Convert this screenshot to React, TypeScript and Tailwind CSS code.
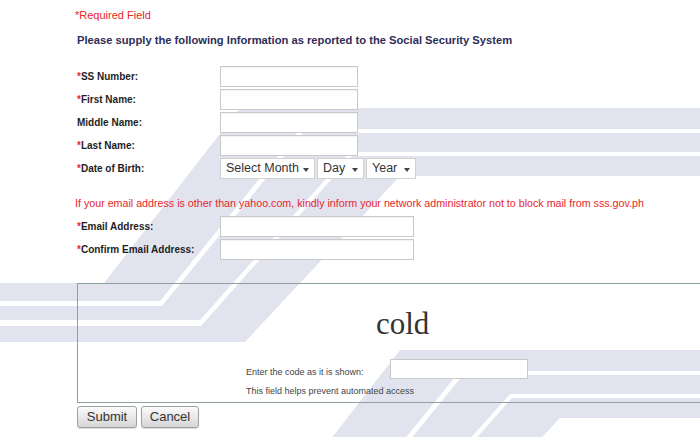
import React from 'react';

type Pt = [number, number];

const R = 720;
const BANDS = (ox: number, oy: number): Pt[][] => {
  const L = -10 - ox;
  const r = R - ox;
  return [
    [[0, 0], [r, 0], [r, 21], [60, 21], [-80, 193], [L, 193], [L, 175], [-136, 175]],
    [[63, 25], [r, 25], [r, 44], [110, 44], [-40, 212], [L, 212], [L, 198], [-78, 198]],
    [[112, 48], [r, 48], [r, 68], [160, 68], [5, 234], [L, 234], [L, 218], [-39, 218]],
  ];
};

const Watermark: React.FC = () => (
  <svg className="absolute inset-0" width="700" height="437" viewBox="0 0 700 437">
    {[
      [240, 108],
      [400, 350],
    ].map(([ox, oy], g) =>
      BANDS(ox, oy).map((pts, i) => (
        <polygon
          key={`${g}-${i}`}
          fill="#e1e4ef"
          points={pts.map(([x, y]) => `${x + ox},${y + oy}`).join(' ')}
        />
      ))
    )}
  </svg>
);

const Label: React.FC<{ text: string; req?: boolean }> = ({ text, req }) => (
  <div className="w-[143px] shrink-0 text-[10px] font-bold text-[#1e1e1e]">
    {req && <span className="text-[#e8262b]">*</span>}
    {text}
  </div>
);

const Input: React.FC<{ w: string }> = ({ w }) => (
  <input
    type="text"
    className={`${w} h-[21px] border border-[#c9c9c9] bg-white shadow-[inset_0_1px_1px_rgba(0,0,0,0.05)] outline-none`}
  />
);

const Select: React.FC<{ label: string; w: string }> = ({ label, w }) => (
  <div className={`relative ${w} h-[21px] border border-[#d0d0d0] bg-white text-[12.5px] text-[#333] flex items-center pl-[5px]`}>
    {label}
    <span className="absolute right-[5px] top-[9px] w-0 h-0 border-l-[3px] border-r-[3px] border-t-[4px] border-l-transparent border-r-transparent border-t-[#444]" />
  </div>
);

const Row: React.FC<{ label: string; req?: boolean; children: React.ReactNode }> = ({ label, req, children }) => (
  <div className="flex items-center h-[21px]">
    <Label text={label} req={req} />
    {children}
  </div>
);

const Button: React.FC<{ text: string; w: string }> = ({ text, w }) => (
  <button className={`${w} h-[22px] rounded-[3px] border border-[#a0a0a0] bg-gradient-to-b from-[#fbfbfb] to-[#d6d6d6] text-[13px] text-[#333] shadow-[0_1px_1px_rgba(0,0,0,0.15)]`}>
    {text}
  </button>
);

export default function App() {
  return (
    <div className="relative w-full h-[437px] overflow-hidden bg-white font-['Liberation_Sans',Arial,sans-serif]">
      <Watermark />
      <div className="relative z-10 pl-[75px] pt-[8px]">
        <p className="text-[11px] leading-[14px] text-[#e8262b]">*Required Field</p>
        <h2 className="mt-[11px] pl-[2px] text-[11.2px] leading-[14px] font-bold text-[#2d2d58]">
          Please supply the following Information as reported to the Social Security System
        </h2>

        <div className="mt-[19px] pl-[2px] flex flex-col gap-[2px]">
          <Row label="SS Number:" req><Input w="w-[138px]" /></Row>
          <Row label="First Name:" req><Input w="w-[138px]" /></Row>
          <Row label="Middle Name:"><Input w="w-[138px]" /></Row>
          <Row label="Last Name:" req><Input w="w-[138px]" /></Row>
          <Row label="Date of Birth:" req>
            <div className="flex gap-[2px]">
              <Select label="Select Month" w="w-[95px]" />
              <Select label="Day" w="w-[47px]" />
              <Select label="Year" w="w-[50px]" />
            </div>
          </Row>
        </div>

        <p className="mt-[17px] text-[10.7px] leading-[14px] text-[#e8262b]">
          If your email address is other than yahoo.com, kindly inform your network administrator not to block mail from sss.gov.ph
        </p>

        <div className="mt-[6px] pl-[2px] flex flex-col gap-[2px]">
          <Row label="Email Address:" req><Input w="w-[194px]" /></Row>
          <Row label="Confirm Email Address:" req><Input w="w-[194px]" /></Row>
        </div>

        <div className="mt-[23px] ml-[2px] w-[640px] border border-[#8fa0a0] pt-[24px] pb-[5px]">
          <div className="pl-[298px] text-[31px] leading-[31px] text-[#333] font-['Liberation_Serif',serif]">cold</div>
          <div className="mt-[20px] pl-[168px] flex items-start">
            <span className="mt-[7px] w-[144px] text-[9px] leading-[12px] text-[#444]">Enter the code as it is shown:</span>
            <input type="text" className="w-[138px] h-[20px] border border-[#c9c9c9] bg-white outline-none" />
          </div>
          <p className="mt-[6px] pl-[168px] text-[9px] leading-[12px] text-[#444]">This field helps prevent automated access</p>
        </div>

        <div className="mt-[3px] ml-[2px] flex gap-[4px]">
          <Button text="Submit" w="w-[60px]" />
          <Button text="Cancel" w="w-[58px]" />
        </div>
      </div>
    </div>
  );
}
